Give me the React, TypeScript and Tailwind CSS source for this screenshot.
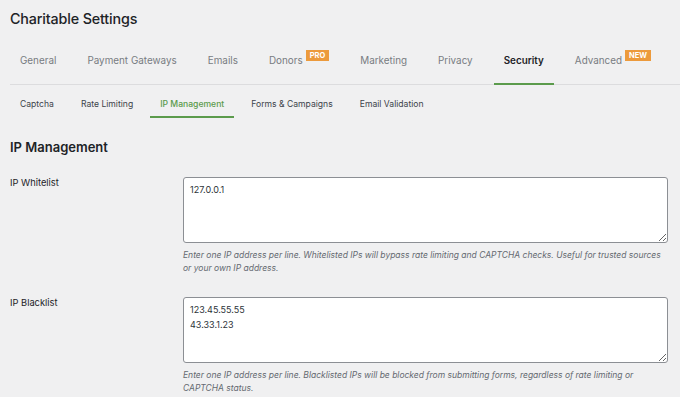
const tabs = [
  { label: "General" },
  { label: "Payment Gateways" },
  { label: "Emails" },
  { label: "Donors", badge: "PRO" },
  { label: "Marketing" },
  { label: "Privacy" },
  { label: "Security", active: true },
  { label: "Advanced", badge: "NEW" },
]

const subTabs = [
  { label: "Captcha" },
  { label: "Rate Limiting" },
  { label: "IP Management", active: true },
  { label: "Forms & Campaigns" },
  { label: "Email Validation" },
]

function Field({ label, value, help }: { label: string; value: string; help: string }) {
  return (
    <div className="flex">
      <div className="w-[173px] shrink-0 text-[9.3px] leading-[12px] text-[#1d2327]">{label}</div>
      <div className="w-[485px]">
        <textarea
          readOnly
          defaultValue={value}
          className="block w-full h-[66px] bg-white border border-[#8c8f94] rounded-[3px] px-[6px] pt-[4px] text-[9px] leading-[15px] text-[#2c3338] outline-none"
        />
        <p className="mt-[6px] text-[8.5px] leading-[13px] italic text-[#646970]">{help}</p>
      </div>
    </div>
  )
}

export default function App() {
  return (
    <div className="min-h-[397px] bg-[#f0f0f1] font-['Inter',sans-serif] pl-[10px] pt-[8px]">
      {/* 제목 */}
      <h1 className="text-[14.3px] leading-[22px] font-medium tracking-[-0.01em] text-[#1d2327]">Charitable Settings</h1>

      {/* 메인 탭 */}
      <nav className="mt-[14px] flex gap-[11px] border-b border-[#dcdcde]">
        {tabs.map((t) => (
          <div
            key={t.label}
            className={`flex items-start whitespace-nowrap px-[10px] pt-[8px] pb-[15px] border-b-2 -mb-px ${
              t.active ? "border-[#5b9b4c] text-[#1d2327] font-semibold" : "border-transparent text-[#787c82]"
            }`}
          >
            <span className="text-[9.9px] leading-[16px]">{t.label}</span>
            {t.badge && (
              <span className="ml-[3px] -mt-[2px] px-[4px] h-[11px] leading-[11px] text-[7.5px] font-bold text-white bg-[#ec9a3c]">
                {t.badge}
              </span>
            )}
          </div>
        ))}
      </nav>

      {/* 서브 탭 */}
      <div className="flex gap-[7px] mt-[11px]">
        {subTabs.map((t) => (
          <div
            key={t.label}
            className={`whitespace-nowrap px-[10px] pb-[4px] border-b-2 text-[8.6px] leading-[16px] ${
              t.active ? "border-[#5b9b4c] text-[#5b9b4c] font-medium" : "border-transparent text-[#3c434a]"
            }`}
          >
            {t.label}
          </div>
        ))}
      </div>

      <h2 className="mt-[19px] text-[13px] leading-[20px] font-semibold text-[#1d2327]">IP Management</h2>

      <div className="mt-[20px] flex flex-col gap-[22px]">
        <Field
          label="IP Whitelist"
          value="127.0.0.1"
          help="Enter one IP address per line. Whitelisted IPs will bypass rate limiting and CAPTCHA checks. Useful for trusted sources or your own IP address."
        />
        <Field
          label="IP Blacklist"
          value={"123.45.55.55\n43.33.1.23"}
          help="Enter one IP address per line. Blacklisted IPs will be blocked from submitting forms, regardless of rate limiting or CAPTCHA status."
        />
      </div>
    </div>
  )
}
